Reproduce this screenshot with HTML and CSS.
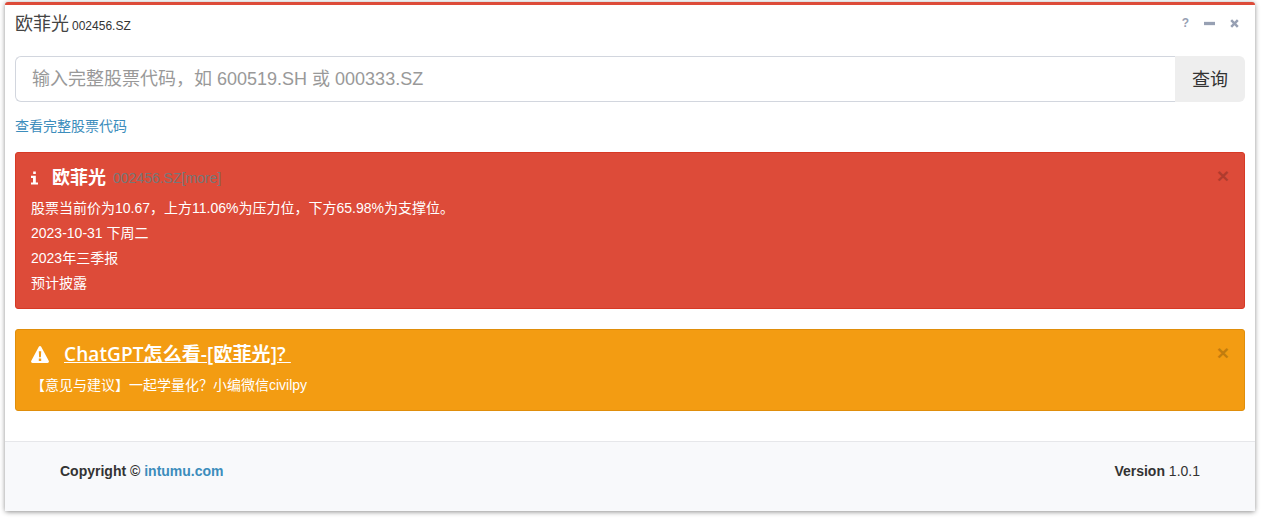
FILE: index.html
```html
<!DOCTYPE html>
<html lang="zh-CN">
<head>
    <meta charset="UTF-8">
    <title>欧菲光 002456.SZ</title>
    <link rel="stylesheet" href="styles.css">
</head>
<body>
    <div class="box">
        <!-- Header -->
        <div class="box-header">
            <h3 class="box-title">欧菲光 <small>002456.SZ</small></h3>
            <div class="box-tools">
                <span class="tool">?</span>
                <svg class="tool-icon" viewBox="0 0 10 10"><path d="M0 3.500h10v3H0z"/></svg>
                <svg class="tool-icon" viewBox="0 0 10 10"><path d="M1.200 2.800 2.800 1.200 5 3.400 7.200 1.200 8.800 2.800 6.600 5 8.800 7.200 7.200 8.800 5 6.600 2.800 8.800 1.200 7.200 3.400 5z"/></svg>
            </div>
        </div>

        <!-- Main Content -->
        <div class="box-body">
            <div class="input-group">
                <input class="form-control" type="text" placeholder="输入完整股票代码，如 600519.SH 或 000333.SZ">
                <button class="query-btn">查询</button>
            </div>
            <p class="code-link"><a href="#">查看完整股票代码</a></p>

            <div class="alert alert-danger">
                <span class="alert-close">×</span>
                <h4 class="alert-title">
                    <svg class="info-icon" viewBox="0 0 8 15"><path d="M2.500 0h3v3h-3zM0 5h5.500v7.500H8V15H0v-2.500h2.300V7.500H0z"/></svg>
                    欧菲光 <small>002456.SZ[more]</small>
                </h4>
                <p>股票当前价为10.67，上方11.06%为压力位，下方65.98%为支撑位。</p>
                <p>2023-10-31 下周二</p>
                <p>2023年三季报</p>
                <p>预计披露</p>
            </div>

            <div class="alert alert-warning">
                <span class="alert-close">×</span>
                <h4 class="alert-title">
                    <svg class="warn-icon" viewBox="0 0 18 16" preserveAspectRatio="none"><path fill-rule="evenodd" d="M9 0c.5 0 .9.300 1.200.800l7.500 13c.6 1 0 2.200-1.200 2.200H1.500C.3 16-.3 14.800.3 13.800l7.500-13C8.100.300 8.500 0 9 0zM7.800 5l.3 5.500h1.800L10.200 5zM7.800 11.700v2.300h2.400v-2.300z"/></svg>
                    <a href="#">ChatGPT怎么看-[欧菲光]?&nbsp;</a>
                </h4>
                <p class="feedback">【意见与建议】一起学量化？小编微信civilpy</p>
            </div>
        </div>

        <!-- Footer -->
        <div class="box-footer">
            <div><b>Copyright ©</b> <a href="#">intumu.com</a></div>
            <div><b>Version</b> 1.0.1</div>
        </div>
    </div>
</body>
</html>
```

FILE: styles.css
```css
* {
    box-sizing: border-box;
}
body {
    margin: 0;
    padding: 2px 9px 7px 5px;
    background-color: #fff;
    color: #333;
    font-family: "Liberation Sans", "Noto Sans CJK SC", sans-serif;
    font-size: 14px;
    overflow: hidden;
}
a {
    color: #3c8dbc;
    text-decoration: none;
}
.box {
    height: 509px;
    display: flex;
    flex-direction: column;
    border-top: 3px solid #dd4b39;
    border-radius: 3px;
    background-color: #fff;
    box-shadow: 0 1px 5px rgba(0, 0, 0, 0.45);
}
.box-header {
    display: flex;
    justify-content: space-between;
    align-items: center;
    height: 40px;
    padding: 0 10px 6px;
}
.box-title {
    margin: 0;
    font-size: 18px;
    font-weight: 400;
    color: #444;
}
.box-title small {
    margin-left: -2px;
    font-size: 12px;
    color: #333;
}
.box-tools {
    display: flex;
    align-items: center;
    gap: 14px;
    margin-top: 2px;
    padding-right: 5px;
    color: #97a0b3;
}
.tool {
    margin-right: 1px;
    font-size: 12px;
    font-weight: 700;
}
.tool-icon {
    width: 11px;
    height: 11px;
    fill: #97a0b3;
}
.box-body {
    flex-grow: 1;
    padding: 11px 10px 0;
}
.input-group {
    display: flex;
    height: 46px;
}
.form-control {
    flex-grow: 1;
    height: 46px;
    padding: 0 16px;
    border: 1px solid #d2d6de;
    border-right: none;
    border-radius: 6px 0 0 6px;
    outline: none;
    font-family: inherit;
    font-size: 18px;
}
.form-control::placeholder {
    color: #999;
}
.query-btn {
    width: 70px;
    padding: 0 0 3px;
    border: none;
    border-radius: 0 6px 6px 0;
    background-color: #eee;
    color: #333;
    font-family: inherit;
    font-size: 18px;
}
.code-link {
    margin: 15px 0 16px;
    line-height: 19px;
}
.alert {
    position: relative;
    margin-bottom: 20px;
    padding: 15px;
    border: 1px solid;
    border-radius: 3px;
    color: #fff;
}
.alert-danger {
    height: 157px;
    background-color: #dd4b39;
    border-color: #d73925;
}
.alert-warning {
    height: 82px;
    padding-top: 14px;
    background-color: #f39c12;
    border-color: #e08e0b;
}
.alert p {
    margin: 0;
    line-height: 25px;
}
.alert-title {
    display: flex;
    align-items: center;
    margin: 0 0 8px;
    font-size: 18px;
    line-height: 20px;
    font-weight: 600;
}
.alert-title small {
    margin-left: 7px;
    font-size: 14px;
    font-weight: 400;
    color: #777;
}
.alert-title a {
    color: #fff;
    text-decoration: underline;
    font-family: "Open Sans", "Noto Sans CJK SC", sans-serif;
    font-size: 19px;
    letter-spacing: 0.1px;
}
.info-icon {
    width: 7px;
    height: 14px;
    margin-right: 14px;
    fill: #fff;
}
.warn-icon {
    width: 18px;
    height: 17px;
    margin-right: 15px;
    fill: #fff;
}
.alert-close {
    position: absolute;
    top: 12px;
    right: 15px;
    font-size: 21px;
    line-height: 21px;
    font-weight: 700;
    color: #000;
    opacity: 0.2;
}
.feedback {
    margin-top: 9px !important;
}
.box-footer {
    display: flex;
    justify-content: space-between;
    align-items: center;
    height: 70px;
    padding: 0 55px 12px;
    border-top: 1px solid #e6e7ea;
    background-color: #f8f9fb;
    font-size: 14px;
    color: #333;
}
.box-footer a {
    font-weight: 700;
}
```
